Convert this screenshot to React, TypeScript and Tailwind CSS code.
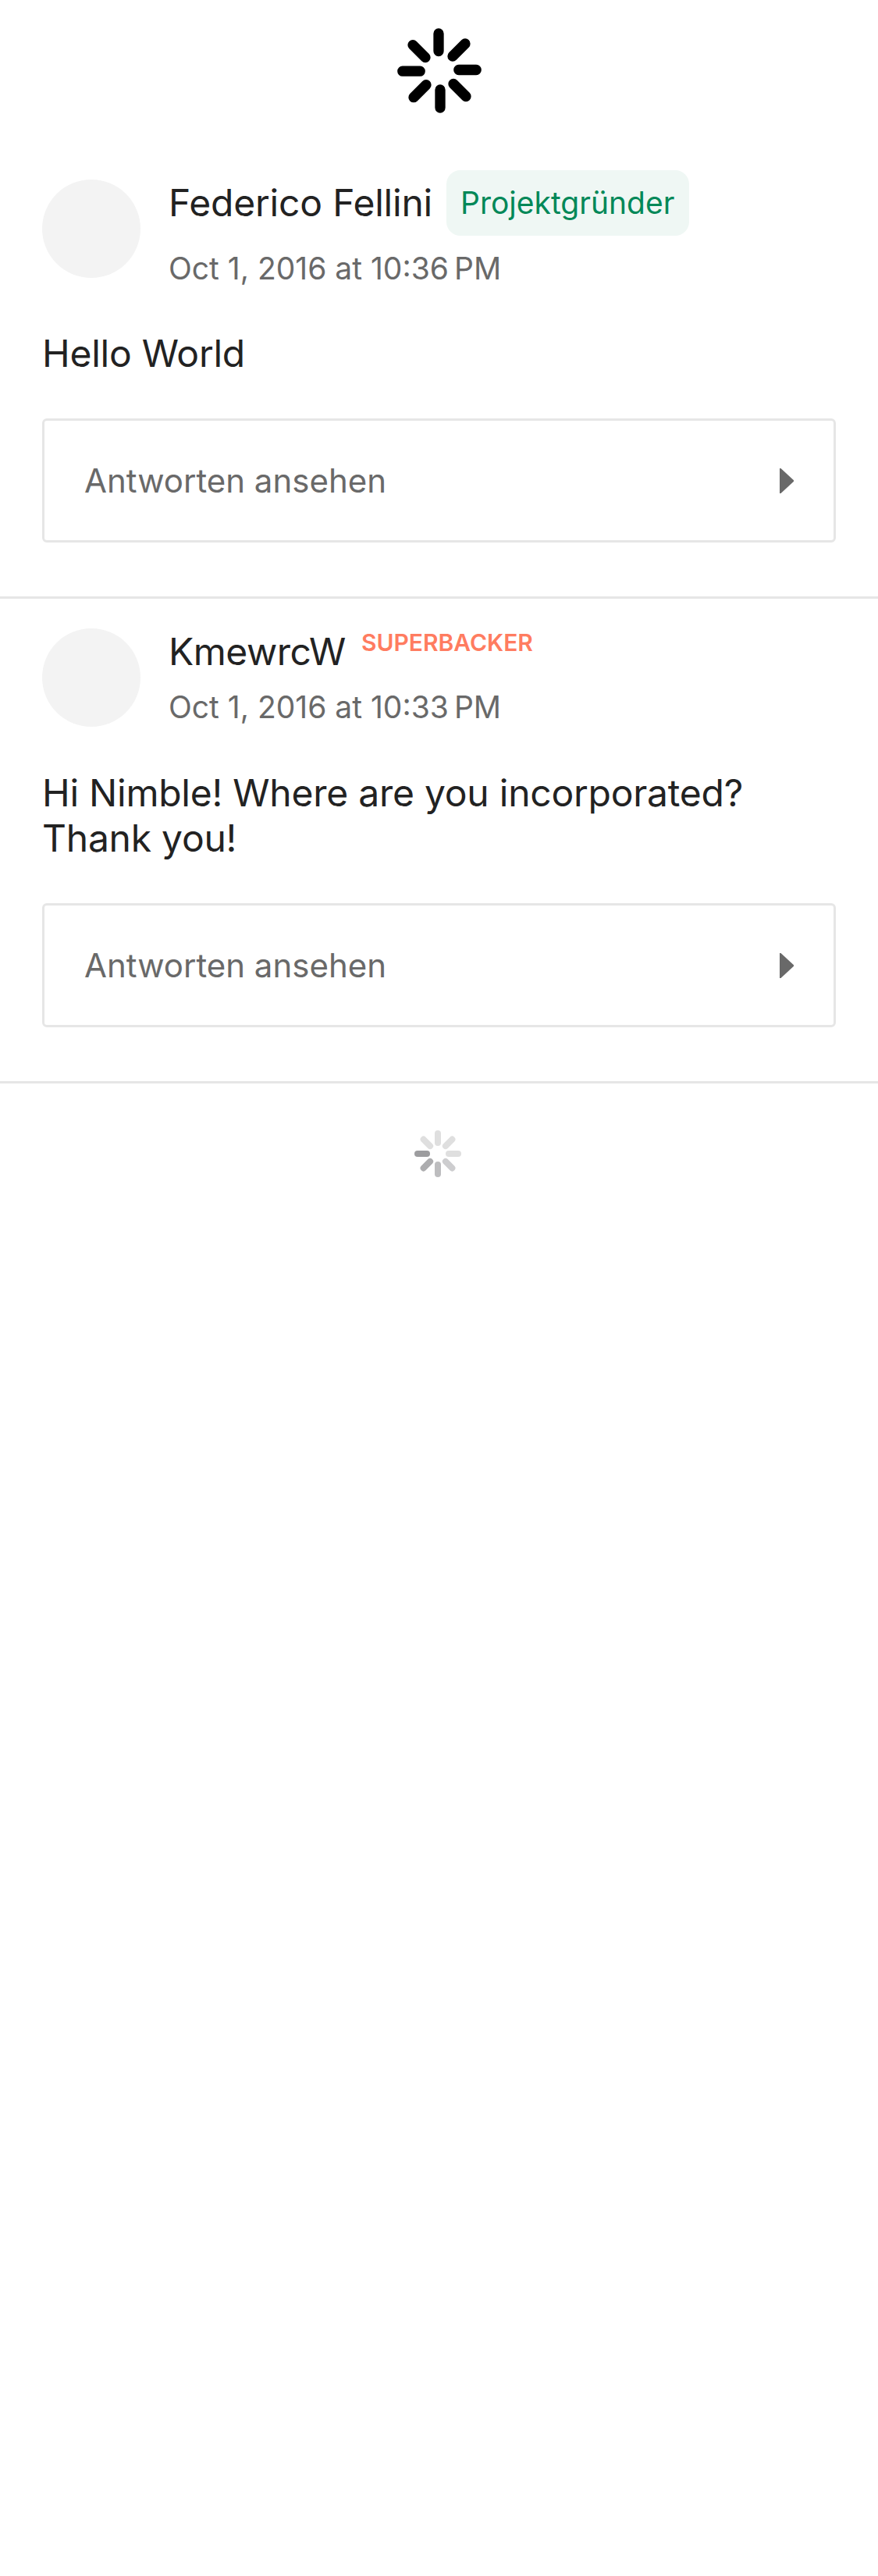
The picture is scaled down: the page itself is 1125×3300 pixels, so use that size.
type Comment = {
  author: string;
  badge: "creator" | "superbacker";
  date: string;
  body: string[];
};

const comments: Comment[] = [
  {
    author: "Federico Fellini",
    badge: "creator",
    date: "Oct 1, 2016 at 10:36\u202fPM",
    body: ["Hello World"],
  },
  {
    author: "KmewrcW",
    badge: "superbacker",
    date: "Oct 1, 2016 at 10:33\u202fPM",
    body: ["Hi Nimble! Where are you incorporated?", "Thank you!"],
  },
];

function RefreshSpinner() {
  return (
    <svg
      width="116"
      height="116"
      viewBox="505 32 116 116"
      fill="none"
      stroke="#000"
      strokeWidth="13.3"
      strokeLinecap="round"
    >
      <path d="M562 43V65.5M564 115V138M515.8 91.2H538.2M587.8 89.5H610.2" />
      <path d="M529 57.6 545 73.6M596 56 580 72M546 108.7 530 124.7M581 107.5 597 123.5" />
    </svg>
  );
}

// Clockwise from the top spoke.
const spokes = ["#dfdfdf", "#dfdfdf", "#dfdfdf", "#cdcdcf", "#bdbdbf", "#adadaf", "#9d9d9f", "#dfdfdf"];

function LoadingSpinner() {
  return (
    <svg width="60" height="60" viewBox="-30 -30 60 60" strokeWidth="8" strokeLinecap="round">
      {spokes.map((color, i) => (
        <line key={i} x1="0" y1="-26" x2="0" y2="-14" stroke={color} transform={`rotate(${i * 45})`} />
      ))}
    </svg>
  );
}

function CommentCell({ comment }: { comment: Comment }) {
  const creator = comment.badge === "creator";
  return (
    <article className="border-b-[3px] border-[#e6e6e6] px-[54px] pb-[69px]">
      <header className="flex items-start gap-9">
        <div className={`size-[126px] shrink-0 rounded-full bg-[#f3f3f3] ${creator ? "mt-3" : ""}`} />
        <div className="flex flex-col gap-[18px]">
          {creator ? (
            <div className="flex items-center gap-[18px]">
              <span className="text-[48px] leading-[58px] tracking-[-0.2px] text-[#222222]">{comment.author}</span>
              <span className="w-[311px] rounded-[18px] bg-[#eff7f4] px-[18px] pt-[18px] pb-[19px] text-[39px] leading-[47px] text-[#028858]">
                Projektgründer
              </span>
            </div>
          ) : (
            <div className="flex items-start gap-5">
              <span className="pt-px text-[48px] leading-[58px] tracking-[-0.48px] text-[#222222]">
                {comment.author}
              </span>
              <span className="text-[30px] font-semibold leading-9 text-[#ff7c60]">SUPERBACKER</span>
            </div>
          )}
          <time className="text-[39px] leading-[47px] text-[#696969]">{comment.date}</time>
        </div>
      </header>
      <div
        className={`text-[48px] leading-[58px] tracking-[-0.24px] text-[#222222] ${creator ? "mt-[57px]" : "mt-14"}`}
      >
        {comment.body.map((line) => (
          <p key={line}>{line}</p>
        ))}
      </div>
      <button className="mt-[54px] flex h-[159px] w-full items-center justify-between rounded-[6px] border-[3px] border-[#e6e6e6] px-[51px]">
        <span className="text-[42px] leading-[51px] text-[#696969]">Antworten ansehen</span>
        <svg width="18" height="32" viewBox="0 0 18 32" fill="#696969">
          <path d="M0 0H1.5L18 15.2V16.8L1.5 32H0Z" />
        </svg>
      </button>
    </article>
  );
}

export default function App() {
  return (
    <main className="flex h-[3300px] w-[1125px] flex-col bg-white font-[Inter,sans-serif]">
      <div className="flex h-[218px] justify-center pt-8">
        <RefreshSpinner />
      </div>
      <CommentCell comment={comments[0]} />
      <div className="pt-[38px]">
        <CommentCell comment={comments[1]} />
      </div>
      <div className="flex justify-center pr-[3px] pt-[60px]">
        <LoadingSpinner />
      </div>
    </main>
  );
}
